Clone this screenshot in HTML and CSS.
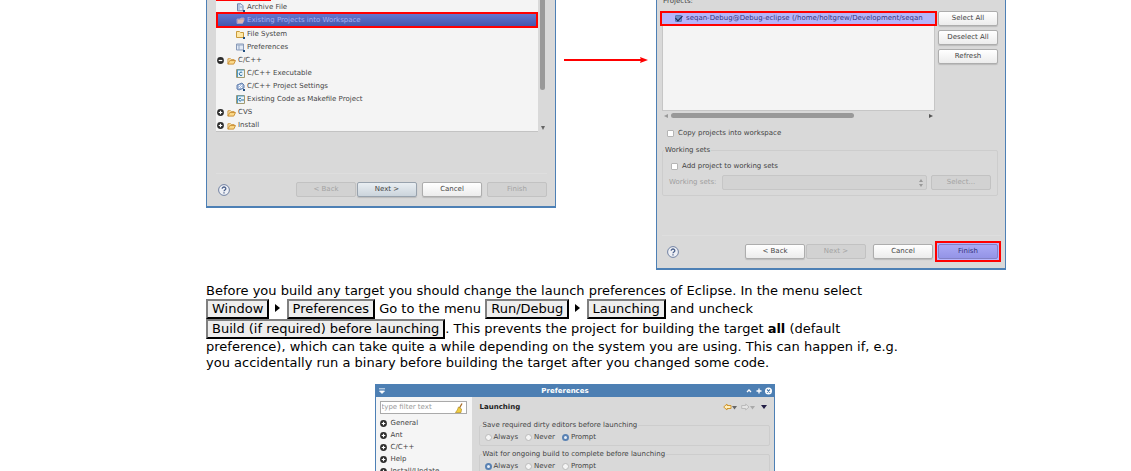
FILE: index.html
```html
<!DOCTYPE html>
<html lang="en">
<head>
<meta charset="utf-8">
<title>Eclipse launch preferences</title>
<link rel="stylesheet" href="styles.css">
</head>
<body>
<svg class="defs" aria-hidden="true">
  <defs>
    <symbol id="folder" viewBox="0 0 10 9"><path d="M1 8V2h3l1 1h3v2" fill="#fdf0c0" stroke="#c88a2c"/><path d="M1 8l2-4h6.500l-2 4z" fill="#fbd98a" stroke="#c88a2c"/></symbol>
    <symbol id="plus" viewBox="0 0 7 7"><circle cx="3.500" cy="3.500" r="3.400" fill="#2c2c2c"/><path d="M1.700 3.500h3.600M3.500 1.700v3.600" stroke="#fff" stroke-width="1.200"/></symbol>
    <symbol id="minus" viewBox="0 0 7 7"><circle cx="3.500" cy="3.500" r="3.400" fill="#2c2c2c"/><path d="M1.700 3.500h3.600" stroke="#fff" stroke-width="1.200"/></symbol>
    <symbol id="help" viewBox="0 0 12 12"><circle cx="6" cy="6" r="5.400" fill="#eef0f5" stroke="#64779c" stroke-width=".9"/><path d="M4.200 4.700c0-2.300 3.700-2.200 3.600 0 0 1.300-1.800 1.300-1.800 2.600M6 8.200v1.300" fill="none" stroke="#4d628c" stroke-width="1.300"/></symbol>
  </defs>
</svg>
<main class="page">
  <div class="wizards">
    <section class="dialog">
      <div class="tree-area">
        <ul class="tree">
          <li class="child"><svg class="icon" viewBox="0 0 9 9"><path d="M1.500.8h3.500l2 2v5H1.500z" fill="#dfe8f5" stroke="#6f83ad"/><path d="M3 1v6M4 4h2" stroke="#8fa3c8"/><path d="M7 7h2v2H7z" fill="#204e80"/></svg>Archive File</li>
          <li class="child chosen"><svg class="icon" viewBox="0 0 9 9"><path d="M1 7.500V3h3l1-1h3v2L6.500 7.500z" fill="#c9a4a4" stroke="#a59ac9"/><path d="M2 4h6L6.500 7H2z" fill="#ddb6b1"/></svg>Existing Projects into Workspace</li>
          <li class="child"><svg class="icon" viewBox="0 0 9 9"><path d="M.5 7.500v-6h3l1 1h3v5z" fill="#ffe8a6" stroke="#c99a3b"/><path d="M7 7h2v2H7z" fill="#204e80"/></svg>File System</li>
          <li class="child"><svg class="icon" viewBox="0 0 9 9"><path d="M.5 1h7v6h-7z" fill="#e2eaf5" stroke="#8799b8"/><path d="M1 2h6M3 2v5" stroke="#94a6c2"/><path d="M7 7h2v2H7z" fill="#204e80"/></svg>Preferences</li>
          <li><svg class="twist"><use href="#minus"/></svg><svg class="folder"><use href="#folder"/></svg>C/C++</li>
          <li class="child"><svg class="icon" viewBox="0 0 9 9"><path d="M.5.500h8v8h-8z" fill="#e8f3fa" stroke="#a29a70"/><path d="M1 1h7M1.500 1v7" stroke="#4e9ac7"/><path d="M6.300 3.700a1.700 1.700 0 1 0 0 2.200" fill="none" stroke="#276c9d"/></svg>C/C++ Executable</li>
          <li class="child"><svg class="icon" viewBox="0 0 9 9"><path d="M1 3l5-2 2 2v3L3 8 1 7z" fill="#a9bddc" stroke="#627fae"/><path d="M3 3l3 3M3 6l3-3" stroke="#fff"/><path d="M7 7h2v2H7z" fill="#204e80"/></svg>C/C++ Project Settings</li>
          <li class="child"><svg class="icon" viewBox="0 0 9 9"><path d="M.5.500h8v8h-8z" fill="#e8f3fa" stroke="#a29a70"/><path d="M1 1h7M1.500 1v7" stroke="#4e9ac7"/><path d="M5 3.500a1.400 1.400 0 1 0 0 2.300M5 5h3" fill="none" stroke="#276c9d"/></svg>Existing Code as Makefile Project</li>
          <li><svg class="twist"><use href="#plus"/></svg><svg class="folder"><use href="#folder"/></svg>CVS</li>
          <li><svg class="twist"><use href="#plus"/></svg><svg class="folder"><use href="#folder"/></svg>Install</li>
        </ul>
        <div class="vscroll"><span class="vthumb"></span><svg class="tiny" viewBox="0 0 4 4"><path d="M0 0h4L2 4z" fill="#666"/></svg></div>
      </div>
      <div class="wizard-foot">
        <svg class="help"><use href="#help"/></svg>
        <div class="buttons">
          <button class="btn" disabled>&lt; Back</button><button class="btn primary">Next &gt;</button>
          <button class="btn apart">Cancel</button><button class="btn apart" disabled>Finish</button>
        </div>
      </div>
    </section>

    <svg class="arrow" viewBox="0 0 84 8"><path d="M0 4h78" stroke="#f00" stroke-width="2"/><path d="M76 1l8 3-8 3 1-3z" fill="#f00"/></svg>

    <section class="dialog import">
      <p class="label">Projects:</p>
      <div class="projects">
        <div class="list-side">
          <div class="list">
            <label class="project"><input type="checkbox" class="check" checked><span>seqan-Debug@Debug-eclipse (/home/holtgrew/Development/seqan</span></label>
          </div>
          <div class="hscroll"><svg class="tiny" viewBox="0 0 4 4"><path d="M4 0v4L0 2z" fill="#999"/></svg><span class="hthumb"></span><svg class="tiny" viewBox="0 0 4 4"><path d="M0 0v4l4-2z" fill="#555"/></svg></div>
        </div>
        <div class="side-buttons">
          <button class="btn">Select All</button>
          <button class="btn">Deselect All</button>
          <button class="btn">Refresh</button>
        </div>
      </div>
      <label class="copy"><input type="checkbox" class="check">Copy projects into workspace</label>
      <fieldset class="group sets">
        <legend>Working sets</legend>
        <label class="add"><input type="checkbox" class="check">Add project to working sets</label>
        <div class="set-row">
          <label for="sets">Working sets:</label>
          <div class="select-wrap"><select id="sets" disabled></select><svg class="updown" viewBox="0 0 4 8"><path d="M0 3l2-3 2 3zM0 5h4L2 8z" fill="#999"/></svg></div>
          <button class="btn" disabled>Select...</button>
        </div>
      </fieldset>
      <div class="wizard-foot">
        <svg class="help"><use href="#help"/></svg>
        <div class="buttons">
          <button class="btn">&lt; Back</button><button class="btn" disabled>Next &gt;</button>
          <button class="btn apart">Cancel</button><span class="marked"><button class="btn">Finish</button></span>
        </div>
      </div>
    </section>
  </div>

  <article class="body-text">
    <p>Before you build any target you should change the launch preferences of Eclipse. In the menu select<br>
    <kbd>Window</kbd> <svg class="next" viewBox="0 0 5 8"><path d="M0 0l5 4-5 4z"/></svg> <kbd>Preferences</kbd> Go to the menu <kbd>Run/Debug</kbd> <svg class="next" viewBox="0 0 5 8"><path d="M0 0l5 4-5 4z"/></svg> <kbd>Launching</kbd> and uncheck<br>
    <kbd>Build (if required) before launching</kbd>. This prevents the project for building the target <strong>all</strong> (default<br>
    preference), which can take quite a while depending on the system you are using. This can happen if, e.g.<br>
    you accidentally run a binary before building the target after you changed some code.</p>

    <section class="prefs">
      <header class="titlebar">
        <svg class="win-menu" viewBox="0 0 6 6"><path d="M0 .8h6M.5 3h5L3 5.500z" fill="#fff" stroke="#fff" stroke-width=".8"/></svg>
        <h2>Preferences</h2>
        <svg class="win-ctl" viewBox="0 0 26 8"><path d="M1 5l2-2 2 2" fill="none" stroke="#fff" stroke-width="1.300"/><path d="M10.500 4h5M13 1.500v5" stroke="#fff" stroke-width="1.300"/><circle cx="22.500" cy="4" r="3.500" fill="#fff"/><path d="M21 2.500l3 3m0-3l-3 3" stroke="#4778ab" stroke-width="1.100"/></svg>
      </header>
      <div class="prefs-body">
        <nav class="prefs-nav">
          <div class="filter"><input type="text" placeholder="type filter text" aria-label="Filter"><svg class="broom" viewBox="0 0 8 10"><path d="M7 .5L4.500 5" stroke="#a66c28" stroke-width="1.300"/><path d="M3.500 4l3 2-.500 3.500H.5C2 8 3 6 3.500 4z" fill="#f1cf3f" stroke="#b58e20" stroke-width=".7"/></svg></div>
          <ul>
            <li><svg class="twist"><use href="#plus"/></svg>General</li>
            <li><svg class="twist"><use href="#plus"/></svg>Ant</li>
            <li><svg class="twist"><use href="#plus"/></svg>C/C++</li>
            <li><svg class="twist"><use href="#plus"/></svg>Help</li>
            <li><svg class="twist"><use href="#plus"/></svg>Install/Update</li>
          </ul>
        </nav>
        <div class="prefs-main">
          <div class="prefs-head">
            <h3>Launching</h3>
            <svg class="history" viewBox="0 0 44 8"><path d="M.7 4L4 1v1.500h4v3H4V7z" fill="#fff0bf" stroke="#cf9630"/><path d="M9 3h5l-2.500 3.500z" fill="#666"/><path d="M26 4l-3.300-3v1.500h-4v3h4V7z" fill="#e5e5e5" stroke="#bbb"/><path d="M27 3h5l-2.500 3.500z" fill="#aaa"/><path d="M38 2h6l-3 4z" fill="#221d45"/></svg>
          </div>
          <fieldset class="group">
            <legend>Save required dirty editors before launching</legend>
            <div class="radios">
              <label><input type="radio" name="save">Always</label>
              <label><input type="radio" name="save">Never</label>
              <label><input type="radio" name="save" checked>Prompt</label>
            </div>
          </fieldset>
          <fieldset class="group">
            <legend>Wait for ongoing build to complete before launching</legend>
            <div class="radios">
              <label><input type="radio" name="wait" checked>Always</label>
              <label><input type="radio" name="wait">Never</label>
              <label><input type="radio" name="wait">Prompt</label>
            </div>
          </fieldset>
        </div>
      </div>
    </section>
  </article>
</main>
</body>
</html>
```

FILE: styles.css
```css
* { box-sizing: border-box; }
html, body { height: 100%; }
body {
  margin: 0;
  overflow: hidden;
  background: #fff;
  color: #000;
  font-family: "DejaVu Sans", Verdana, sans-serif;
}
.defs { position: absolute; width: 0; height: 0; }
ul, p, h2, h3 { margin: 0; padding: 0; }
ul { list-style: none; }
svg { flex: none; }
.page { padding: 0 125px 0 206px; }

/* wizard dialogs */
.wizards {
  display: grid;
  grid-template-columns: 7fr 2fr 7fr;
  align-items: start;
}
.dialog, .prefs {
  font-size: 7px;
  line-height: 9px;
  color: #444;
  background: #d9d9d9;
}
.dialog {
  min-width: 0;
  padding: 0 8px 9px 9px;
  border: solid #4d80b5;
  border-width: 0 1px 2px 1px;
}
.tree-area { display: flex; }
.tree {
  position: relative;
  flex: 1;
  background: #f4f4f4;
  border-bottom: 1px solid #c3c3c3;
}
.tree::before {
  content: "";
  position: absolute;
  top: 0;
  left: 0;
  width: 55px;
  height: 1px;
  background: #f00;
}
.tree li {
  display: flex;
  align-items: center;
  height: 13px;
  padding: 2px 0 0 1px;
}
.tree .child { padding-left: 20px; }
.tree .chosen {
  height: 16px;
  margin: -1px 0;
  padding: 0 0 0 18px;
  border: 2px solid #f00;
  background: linear-gradient(#6377cf, #4457ad);
  color: #a6aff0;
}
.icon { width: 9px; height: 9px; margin-right: 2px; }
.twist { width: 7px; height: 7px; margin-right: 3px; }
.folder { width: 9px; height: 8px; margin-right: 2px; }
.vscroll {
  display: flex;
  flex-direction: column;
  align-items: center;
  justify-content: space-between;
  width: 9px;
  padding-bottom: 2px;
}
.vthumb { width: 5px; height: 90px; background: #999; border-radius: 0 0 3px 3px; }
.tiny { width: 4px; height: 4px; }
.wizard-foot {
  display: flex;
  align-items: center;
  justify-content: space-between;
  margin-top: 41px;
  padding-top: 8px;
  border-top: 1px solid #dedede;
}
.help { width: 12px; height: 12px; margin-left: 2px; }
.buttons { display: flex; gap: 1px; }
.btn {
  width: 60px;
  height: 15px;
  padding: 0;
  border: 1px solid #adadad;
  border-radius: 2px;
  background: linear-gradient(#fff, #ececec);
  box-shadow: 0 1px 1px #bbb;
  color: #444;
  font: inherit;
}
.btn:disabled {
  background: #d2d2d2;
  border-color: #c2c2c2;
  box-shadow: none;
  color: #a3a3a3;
}
.primary { background: linear-gradient(#e9eef2, #cbd4dc); border-color: #98a2ad; }
.apart { margin-left: 4px; }
.marked {
  display: flex;
  margin: -3px 0 -3px 1px;
  padding: 1px;
  border: 2px solid #f00;
  background: #b5b5fa;
}
.marked .btn {
  background: linear-gradient(#a9a9f5, #9494e6);
  border-color: #8181c8;
  box-shadow: none;
  color: #33337a;
}

.import { padding: 0 7px 9px 5px; }
.import .wizard-foot { margin: 39px -3px 0 0; }
.import .help { margin-left: 5px; }
.import .apart { margin-left: 6px; }
.label { margin: -3px 0 0 1px; line-height: 9px; }
.projects { display: flex; gap: 3px; margin-top: 5px; }
.list-side { flex: 1; min-width: 0; }
.list {
  height: 100px;
  background: #f4f4f4;
  border: 1px solid #c6c6c6;
}
.project {
  display: flex;
  align-items: center;
  gap: 4px;
  height: 15px;
  margin: -1px -3px 0;
  padding-left: 13px;
  border: 2px solid #f00;
  background: #b5b5fa;
  color: #35357c;
  overflow: hidden;
  white-space: nowrap;
}
.project span { min-width: 0; overflow: hidden; }
.check {
  appearance: none;
  flex: none;
  display: grid;
  place-items: center;
  width: 7px;
  height: 7px;
  margin: 0;
  background: #fff;
  border: 1px solid #b5b5b5;
  border-radius: 1px;
}
.check:checked { background: #6f8ec9; border-color: #5b78ba; }
.check:checked::after {
  content: "";
  width: 3px;
  height: 6px;
  margin-top: -3px;
  border: solid #16234f;
  border-width: 0 1px 1px 0;
  transform: rotate(45deg);
}
.hscroll {
  display: flex;
  align-items: center;
  justify-content: space-between;
  height: 9px;
  padding: 0 2px;
}
.hthumb { width: 68%; height: 5px; margin-right: auto; margin-left: 3px; background: #999; border-radius: 3px; }
.side-buttons { display: flex; flex-direction: column; gap: 4px; }
.copy, .add { display: flex; align-items: center; gap: 4px; }
.copy { margin: 9px 0 0 5px; }
.group {
  min-width: 0;
  margin: 0;
  padding: 0;
  border: 1px solid #cdcdcd;
  border-radius: 2px;
}
.group legend { margin-left: 2px; padding: 0 1px; }
.sets { margin-top: 8px; padding: 7px 6px 5px; }
.sets legend { margin-left: -5px; }
.add { padding-left: 2px; }
.set-row { display: flex; align-items: center; gap: 6px; margin-top: 4px; color: #a0a0a0; }
.set-row .btn { margin-left: -2px; }
.select-wrap { position: relative; flex: 1; display: flex; }
.select-wrap select {
  appearance: none;
  width: 100%;
  height: 15px;
  border: 1px solid #bebebe;
  border-radius: 2px;
  background: #d1d1d1;
  font: inherit;
}
.updown { position: absolute; top: 4px; right: 4px; width: 4px; height: 8px; }
.arrow { width: 84px; height: 8px; margin: 56px 0 0 8px; }

/* documentation text */
.body-text { padding: 13px 63px 0 0; font-size: 13px; line-height: 16px; }
.body-text p { white-space: nowrap; }
kbd {
  display: inline-block;
  padding: 0 4px;
  border: 2px solid #000;
  border-top-color: #808080;
  border-left-color: #808080;
  background: #eee;
  font: inherit;
}
.next { width: 5px; height: 8px; margin: 0 2px 1px; }

/* preferences window */
.prefs {
  width: 400px;
  margin: 13px auto 0;
  border: 1px solid #4d80b5;
}
.titlebar {
  display: flex;
  align-items: center;
  justify-content: space-between;
  height: 12px;
  padding: 0 2px 0 3px;
  background: #4d7fb3;
  color: #fff;
}
.titlebar h2, .prefs-head h3 { font-size: 7px; line-height: 9px; }
.win-menu { width: 6px; height: 6px; }
.win-ctl { width: 26px; height: 8px; }
.prefs-body { display: flex; }
.prefs-nav { width: 96px; padding: 4px; background: #f5f5f5; }
.filter {
  display: flex;
  align-items: center;
  width: 87px;
  height: 13px;
  padding: 0 3px 0 1px;
  border: 1px solid #aaa;
  background: #fff;
}
.filter input {
  flex: 1;
  min-width: 0;
  padding: 0;
  border: 0;
  outline: 0;
  background: none;
  font: inherit;
}
.filter input::placeholder { color: #999; }
.broom { width: 8px; height: 10px; }
.prefs-nav ul { margin-top: 3px; }
.prefs-nav li { display: flex; align-items: center; height: 12px; white-space: nowrap; }
.prefs-nav .twist { margin-right: 4px; }
.prefs-main { flex: 1; padding: 0 4px 8px 7px; }
.prefs-head {
  display: flex;
  align-items: center;
  justify-content: space-between;
  height: 20px;
  padding: 0 3px 0 1px;
  color: #222;
}
.history { width: 44px; height: 8px; }
.prefs-main .group { margin-top: 4px; }
.radios { display: flex; gap: 7px; padding: 3px 5px; }
.radios label { display: flex; align-items: center; gap: 2px; }
.radios input {
  appearance: none;
  width: 7px;
  height: 7px;
  margin: 0;
  border: 1px solid #bbb;
  border-radius: 50%;
  background: #f5f5f5;
}
.radios input:checked { border: 2px solid #5a82b3; background: #e8eef6; }
```
